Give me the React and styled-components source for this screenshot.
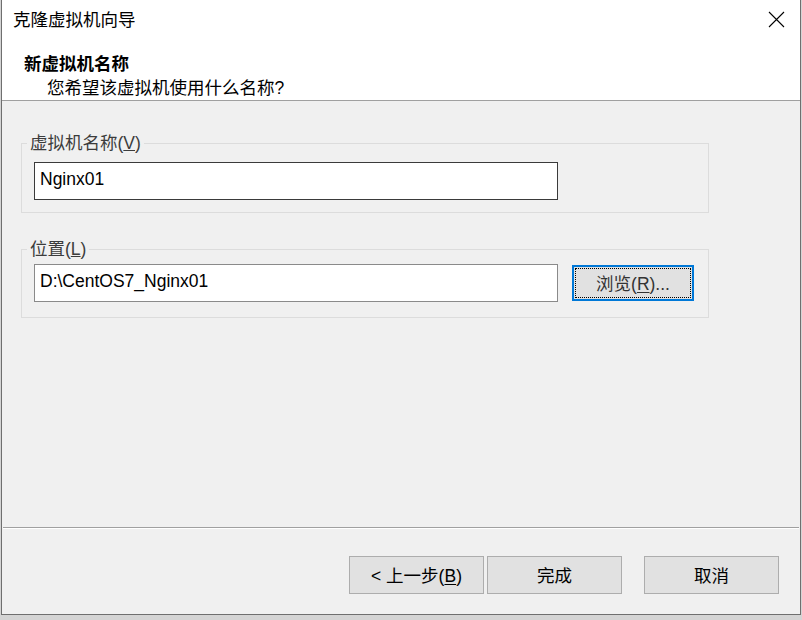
import styled, { createGlobalStyle } from "styled-components";

const GlobalStyle = createGlobalStyle`
html, body {
    margin: 0;
    padding: 0;
    background: #d4d4d4;
}
body {
    width: 802px;
    height: 620px;
    overflow: hidden;
    font-family: "Liberation Sans", "Noto Sans CJK SC", sans-serif;
}
`

const Window = styled.div`
box-sizing: border-box;
margin-left: 1px;
width: 800px;
height: 615px;
display: flex;
flex-direction: column;
background: #f0f0f0;
border-left: 1px solid #6f6f6f;
border-right: 1px solid #6f6f6f;
border-bottom: 1px solid #6f6f6f;
font-size: 17.5px;
color: #000;
`

const TitleBar = styled.div`
height: 38px;
flex: none;
display: flex;
align-items: center;
justify-content: space-between;
padding: 0 15px 0 11px;
background: #fff;
`

const Title = styled.span`
line-height: 22px;
margin-top: 1px;
`

const CloseIcon = styled.svg`
width: 17px;
height: 17px;
margin-top: 1px;
`

const Header = styled.div`
height: 62px;
flex: none;
box-sizing: content-box;
background: #fff;
border-bottom: 1px solid #a0a0a0;
padding-left: 22px;
display: flex;
flex-direction: column;
`

const Heading = styled.div`
margin-top: 15px;
font-weight: bold;
line-height: 22px;
`

const Subtitle = styled.div`
margin-top: 2px;
padding-left: 23px;
line-height: 22px;
`

const Body = styled.div`
flex: 1;
padding: 32px 0 0 19px;
display: flex;
flex-direction: column;
gap: 26px;
`

const Group = styled.fieldset`
box-sizing: border-box;
width: 688px;
margin: 0;
padding: ${p => p.$top}px 12px ${p => p.$bottom}px 12px;
border: 1px solid #dcdcdc;
min-inline-size: 0;
`

const Legend = styled.legend`
margin-left: -7px;
padding: 0 3px;
line-height: 20px;
color: #3c3c3c;
`

const Row = styled.div`
display: flex;
align-items: center;
gap: 14px;
`

const TextBox = styled.input`
box-sizing: border-box;
width: 524px;
height: 38px;
margin: 0;
padding: 0 5px 3px;
border: 1px solid ${p => p.$dark ? "#3a3a3a" : "#8a8a8a"};
background: #fff;
font: inherit;
color: #000;
outline: none;
`

const Button = styled.button`
box-sizing: border-box;
width: ${p => p.$w}px;
height: ${p => p.$h}px;
margin: 0;
padding: 0 0 2px;
background: #e1e1e1;
border: 1px solid #adadad;
font: inherit;
color: #000;
position: relative;
u {
    text-decoration-thickness: 1px;
    text-underline-offset: 2px;
}
`

const BrowseButton = styled(Button)`
border: 2px solid #0078d7;
color: #333;
&::after {
    content: "";
    position: absolute;
    inset: 1px;
    border: 1px dotted #000;
}
`

const Separator = styled.div`
flex: none;
margin: 0 1px;
border-top: 1px solid #a0a0a0;
border-bottom: 1px solid #fff;
`

const Footer = styled.div`
height: 85px;
flex: none;
display: flex;
align-items: flex-start;
justify-content: flex-end;
padding: 27px 21px 0 0;
box-sizing: border-box;
`

const StepButtons = styled.div`
display: flex;
gap: 3px;
margin-right: 22px;
`

const App = () => {
    return (
        <>
            <GlobalStyle />
            <Window>
                <TitleBar>
                    <Title>克隆虚拟机向导</Title>
                    <CloseIcon viewBox="0 0 17 17">
                        <path d="M1 1 L16 16 M16 1 L1 16" stroke="#000" strokeWidth="1.1" fill="none" />
                    </CloseIcon>
                </TitleBar>

                <Header>
                    <Heading>新虚拟机名称</Heading>
                    <Subtitle>您希望该虚拟机使用什么名称?</Subtitle>
                </Header>

                <Body>
                    <Group $top={9} $bottom={12}>
                        <Legend>虚拟机名称(<u>V</u>)</Legend>
                        <TextBox $dark defaultValue="Nginx01" />
                    </Group>

                    <Group $top={5} $bottom={15}>
                        <Legend>位置(<u>L</u>)</Legend>
                        <Row>
                            <TextBox defaultValue="D:\CentOS7_Nginx01" />
                            <BrowseButton $w={122} $h={36}>浏览(<u>R</u>)...</BrowseButton>
                        </Row>
                    </Group>
                </Body>

                <Separator />

                <Footer>
                    <StepButtons>
                        <Button $w={135} $h={38}>&lt; 上一步(<u>B</u>)</Button>
                        <Button $w={135} $h={38}>完成</Button>
                    </StepButtons>
                    <Button $w={135} $h={38}>取消</Button>
                </Footer>
            </Window>
        </>
    )
}

export default App;
